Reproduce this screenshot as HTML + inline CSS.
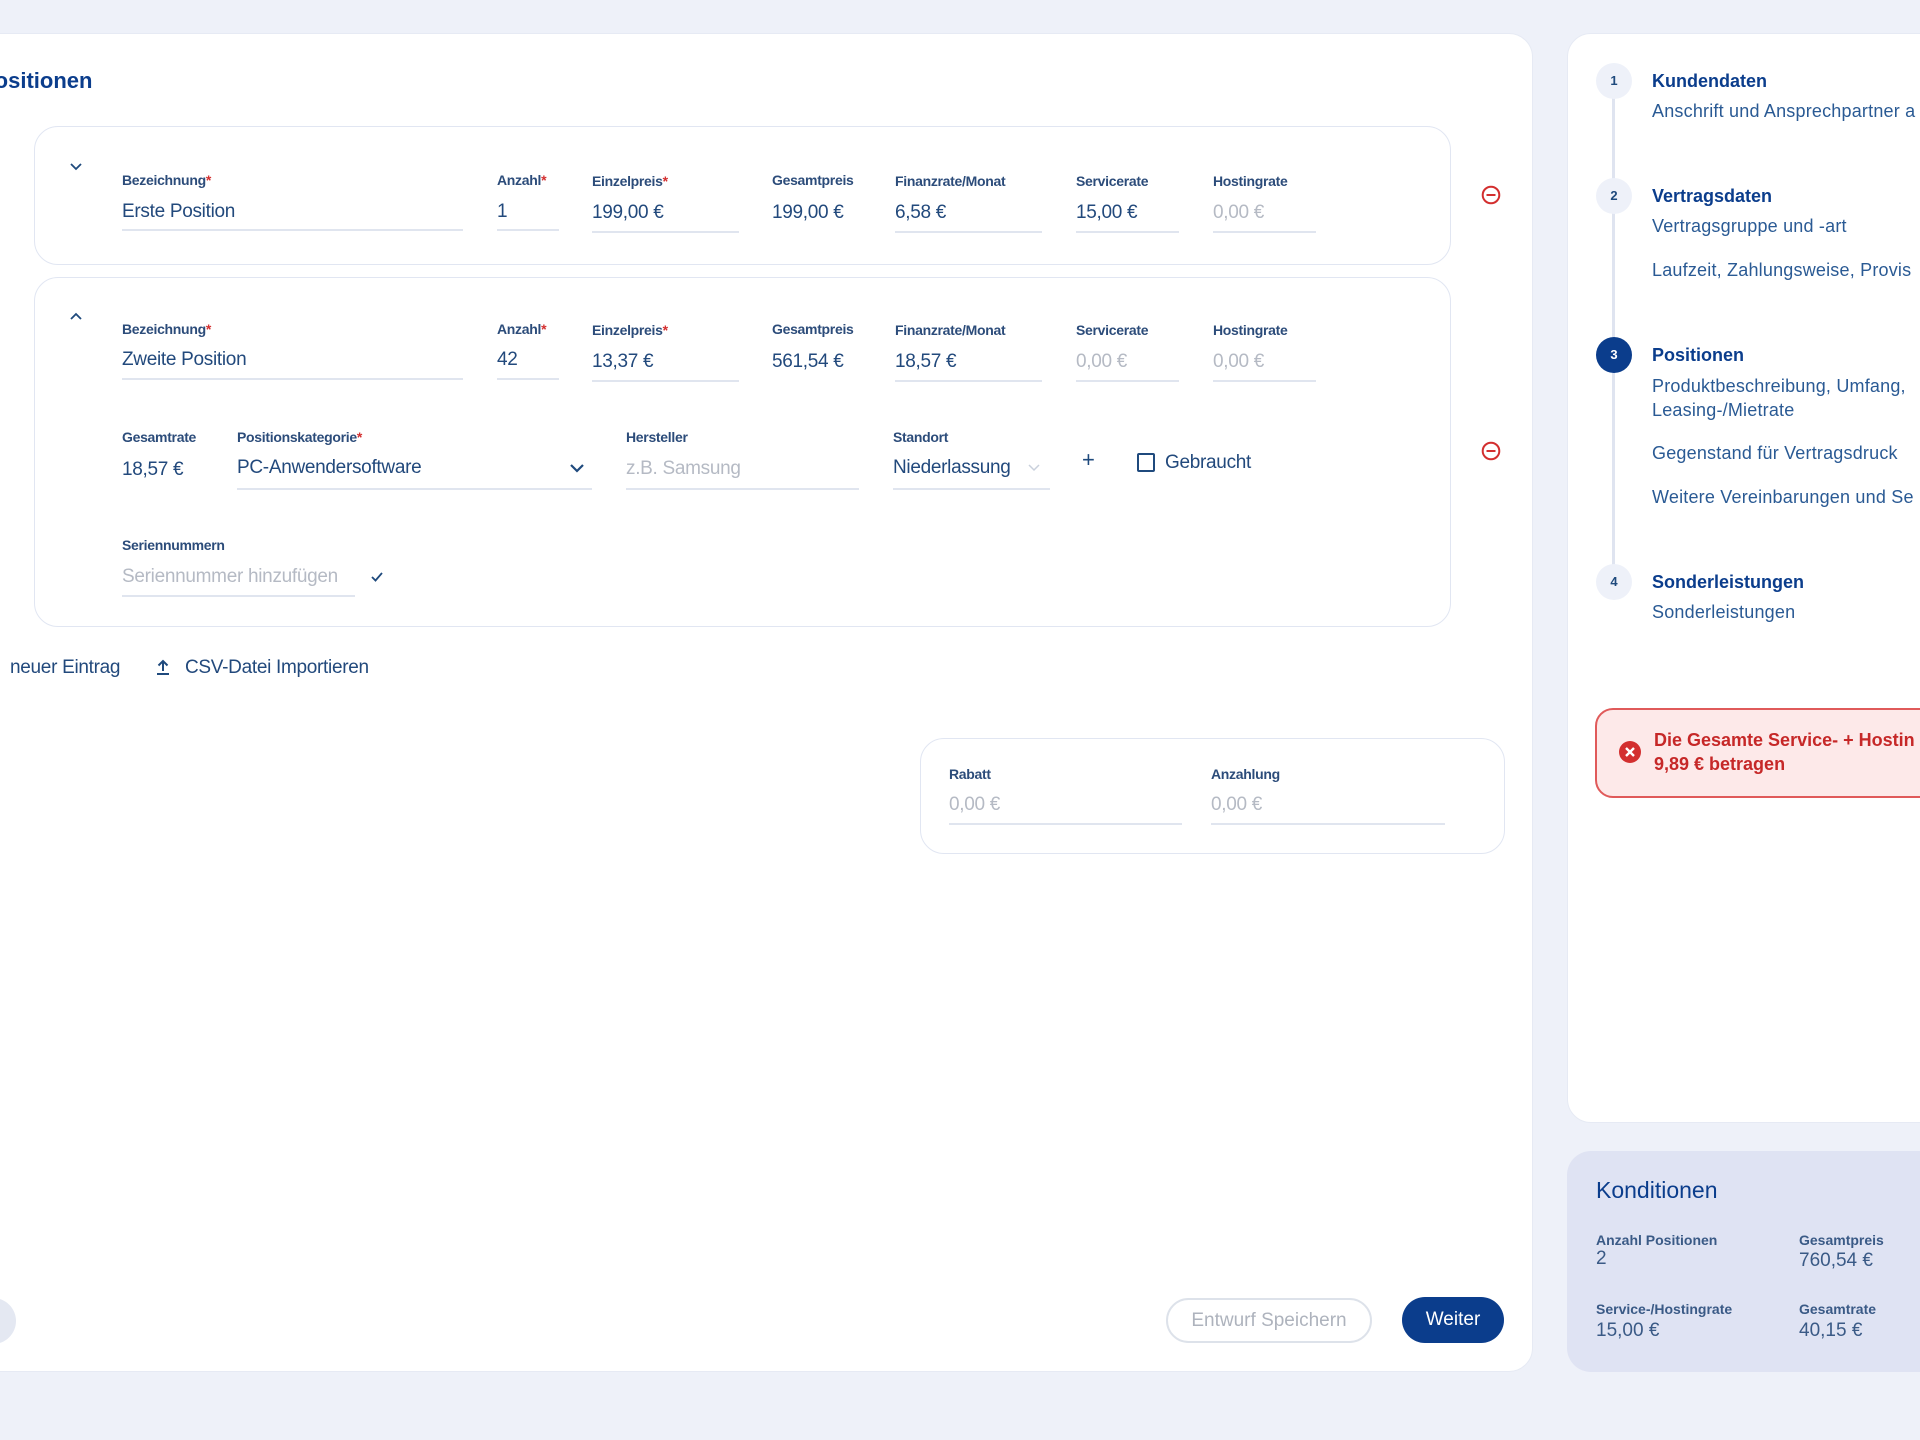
<!DOCTYPE html>
<html><head><meta charset="utf-8"><style>
*{box-sizing:border-box;margin:0;padding:0}
body{width:1920px;height:1440px;background:#eef1f9;position:relative;overflow:hidden;font-family:"Liberation Sans",sans-serif;color:#22497c}
.a{position:absolute;white-space:nowrap}
.card{position:absolute;background:#fff;border:1.5px solid #e1e6f2;border-radius:24px}
.l{position:absolute;font-size:14px;font-weight:bold;color:#2c4c7a;letter-spacing:-0.3px;white-space:nowrap}
.l i{color:#d32f2f;font-style:normal}
.v{position:absolute;font-size:19px;color:#22497c;letter-spacing:-0.3px;white-space:nowrap;line-height:24px}
.p{color:#b5bac4}
.u{position:absolute;height:2px;background:#e0e5ef}
.st{position:absolute;font-size:18px;color:#2a5a94;white-space:nowrap;letter-spacing:0.2px}
.sh{position:absolute;font-size:18px;font-weight:bold;color:#0b3d8c;white-space:nowrap}
.circ{position:absolute;width:36px;height:36px;border-radius:50%;background:#eef1f9;color:#1f4a7d;font-size:13px;font-weight:bold;text-align:center;line-height:36px}
.k{position:absolute;font-size:14px;font-weight:bold;color:#3a5a86;white-space:nowrap}
.kv{position:absolute;font-size:19px;color:#3a5a86;white-space:nowrap}
</style></head><body>

<div class="card" style="left:-40px;top:33px;width:1573px;height:1339px;border-color:#e6eaf4"></div>
<div class="a" style="left:-20px;top:68px;font-size:22px;font-weight:bold;color:#0b3d8c">Positionen</div>

<div class="card" style="left:34px;top:126px;width:1417px;height:139px"></div>
<svg class="a" style="left:69px;top:162px" width="14" height="10" viewBox="0 0 14 10"><path d="M2 2l5 5 5-5" fill="none" stroke="#1f4a7d" stroke-width="1.8"/></svg>
<div class="l" style="left:122px;top:172px">Bezeichnung<i>*</i></div>
<div class="v" style="left:122px;top:200px">Erste Position</div>
<div class="u" style="left:122px;top:229px;width:341px"></div>
<div class="l" style="left:497px;top:172px">Anzahl<i>*</i></div>
<div class="v" style="left:497px;top:200px">1</div>
<div class="u" style="left:497px;top:229px;width:62px"></div>
<div class="l" style="left:592px;top:173px">Einzelpreis<i>*</i></div>
<div class="v" style="left:592px;top:201px">199,00 €</div>
<div class="u" style="left:592px;top:231px;width:147px"></div>
<div class="l" style="left:772px;top:172px">Gesamtpreis</div>
<div class="v" style="left:772px;top:201px">199,00 €</div>
<div class="l" style="left:895px;top:173px">Finanzrate/Monat</div>
<div class="v" style="left:895px;top:201px">6,58 €</div>
<div class="u" style="left:895px;top:231px;width:147px"></div>
<div class="l" style="left:1076px;top:173px">Servicerate</div>
<div class="v" style="left:1076px;top:201px">15,00 €</div>
<div class="u" style="left:1076px;top:231px;width:103px"></div>
<div class="l" style="left:1213px;top:173px">Hostingrate</div>
<div class="v p" style="left:1213px;top:201px">0,00 €</div>
<div class="u" style="left:1213px;top:231px;width:103px"></div>
<svg class="a" style="left:1481px;top:185px" width="20" height="20" viewBox="0 0 20 20"><circle cx="10" cy="10" r="8.3" fill="none" stroke="#d32f2f" stroke-width="2"/><path d="M5.5 10h9" stroke="#d32f2f" stroke-width="2"/></svg>

<div class="card" style="left:34px;top:277px;width:1417px;height:350px"></div>
<svg class="a" style="left:69px;top:311px" width="14" height="10" viewBox="0 0 14 10"><path d="M2 8l5-5 5 5" fill="none" stroke="#1f4a7d" stroke-width="1.8"/></svg>
<div class="l" style="left:122px;top:321px">Bezeichnung<i>*</i></div>
<div class="v" style="left:122px;top:348px">Zweite Position</div>
<div class="u" style="left:122px;top:378px;width:341px"></div>
<div class="l" style="left:497px;top:321px">Anzahl<i>*</i></div>
<div class="v" style="left:497px;top:348px">42</div>
<div class="u" style="left:497px;top:378px;width:62px"></div>
<div class="l" style="left:592px;top:322px">Einzelpreis<i>*</i></div>
<div class="v" style="left:592px;top:350px">13,37 €</div>
<div class="u" style="left:592px;top:380px;width:147px"></div>
<div class="l" style="left:772px;top:321px">Gesamtpreis</div>
<div class="v" style="left:772px;top:350px">561,54 €</div>
<div class="l" style="left:895px;top:322px">Finanzrate/Monat</div>
<div class="v" style="left:895px;top:350px">18,57 €</div>
<div class="u" style="left:895px;top:380px;width:147px"></div>
<div class="l" style="left:1076px;top:322px">Servicerate</div>
<div class="v p" style="left:1076px;top:350px">0,00 €</div>
<div class="u" style="left:1076px;top:380px;width:103px"></div>
<div class="l" style="left:1213px;top:322px">Hostingrate</div>
<div class="v p" style="left:1213px;top:350px">0,00 €</div>
<div class="u" style="left:1213px;top:380px;width:103px"></div>

<div class="l" style="left:122px;top:429px">Gesamtrate</div>
<div class="v" style="left:122px;top:458px">18,57 €</div>
<div class="l" style="left:237px;top:429px">Positionskategorie<i>*</i></div>
<div class="v" style="left:237px;top:456px">PC-Anwendersoftware</div>
<svg class="a" style="left:569px;top:462px" width="16" height="12" viewBox="0 0 16 12"><path d="M2 3l6 6 6-6" fill="none" stroke="#1f4a7d" stroke-width="2.2"/></svg>
<div class="u" style="left:237px;top:488px;width:355px"></div>
<div class="l" style="left:626px;top:429px">Hersteller</div>
<div class="v p" style="left:626px;top:457px">z.B. Samsung</div>
<div class="u" style="left:626px;top:488px;width:233px"></div>
<div class="l" style="left:893px;top:429px">Standort</div>
<div class="v" style="left:893px;top:456px">Niederlassung</div>
<svg class="a" style="left:1027px;top:463px" width="14" height="10" viewBox="0 0 14 10"><path d="M2 2l5 5 5-5" fill="none" stroke="#c9d0dc" stroke-width="1.5"/></svg>
<div class="u" style="left:893px;top:488px;width:157px"></div>
<div class="a" style="left:1082px;top:447px;font-size:22px;color:#1f4a7d">+</div>
<div class="a" style="left:1137px;top:453px;width:18px;height:19px;border:2px solid #1f4a7d;border-radius:2px"></div>
<div class="v" style="left:1165px;top:451px">Gebraucht</div>
<svg class="a" style="left:1481px;top:441px" width="20" height="20" viewBox="0 0 20 20"><circle cx="10" cy="10" r="8.3" fill="none" stroke="#d32f2f" stroke-width="2"/><path d="M5.5 10h9" stroke="#d32f2f" stroke-width="2"/></svg>

<div class="l" style="left:122px;top:537px">Seriennummern</div>
<div class="v p" style="left:122px;top:565px">Seriennummer hinzufügen</div>
<div class="u" style="left:122px;top:595px;width:233px"></div>
<svg class="a" style="left:370px;top:571px" width="14" height="12" viewBox="0 0 14 12"><path d="M2 6l3.5 3.5L12 2" fill="none" stroke="#1f4a7d" stroke-width="1.8"/></svg>

<div class="v" style="left:10px;top:656px">neuer Eintrag</div>
<svg class="a" style="left:154px;top:657px" width="18" height="20" viewBox="0 0 18 20"><path d="M9 14V4M4.5 8.5L9 4l4.5 4.5M3 17h12" fill="none" stroke="#1f4a7d" stroke-width="2"/></svg>
<div class="v" style="left:185px;top:656px">CSV-Datei Importieren</div>

<div class="card" style="left:920px;top:738px;width:585px;height:116px"></div>
<div class="l" style="left:949px;top:766px">Rabatt</div>
<div class="v p" style="left:949px;top:793px">0,00 €</div>
<div class="u" style="left:949px;top:823px;width:233px"></div>
<div class="l" style="left:1211px;top:766px">Anzahlung</div>
<div class="v p" style="left:1211px;top:793px">0,00 €</div>
<div class="u" style="left:1211px;top:823px;width:234px"></div>

<div class="a" style="left:-30px;top:1298px;width:46px;height:46px;border-radius:50%;background:#e4e8f2"></div>
<div class="a" style="left:1166px;top:1298px;width:206px;height:45px;border:2px solid #dde2ea;border-radius:23px;text-align:center;line-height:41px;font-size:19px;color:#aeb3bd">Entwurf Speichern</div>
<div class="a" style="left:1402px;top:1297px;width:102px;height:46px;background:#0b3d8c;border-radius:23px;text-align:center;line-height:46px;font-size:19px;color:#fff">Weiter</div>

<div class="a" style="left:1567px;top:33px;width:400px;height:1090px;background:#fff;border:1.5px solid #e6eaf4;border-radius:24px"></div>
<div class="a" style="left:1612px;top:82px;width:3px;height:500px;background:#dfe4f0"></div>
<div class="circ" style="left:1596px;top:63px">1</div>
<div class="circ" style="left:1596px;top:178px">2</div>
<div class="circ" style="left:1596px;top:337px;background:#0b3d8c;color:#fff">3</div>
<div class="circ" style="left:1596px;top:564px">4</div>
<div class="sh" style="left:1652px;top:71px">Kundendaten</div>
<div class="st" style="left:1652px;top:101px">Anschrift und Ansprechpartner a</div>
<div class="sh" style="left:1652px;top:186px">Vertragsdaten</div>
<div class="st" style="left:1652px;top:216px">Vertragsgruppe und -art</div>
<div class="st" style="left:1652px;top:260px">Laufzeit, Zahlungsweise, Provis</div>
<div class="sh" style="left:1652px;top:345px">Positionen</div>
<div class="st" style="left:1652px;top:376px">Produktbeschreibung, Umfang,</div>
<div class="st" style="left:1652px;top:400px">Leasing-/Mietrate</div>
<div class="st" style="left:1652px;top:443px">Gegenstand für Vertragsdruck</div>
<div class="st" style="left:1652px;top:487px">Weitere Vereinbarungen und Se</div>
<div class="sh" style="left:1652px;top:572px">Sonderleistungen</div>
<div class="st" style="left:1652px;top:602px">Sonderleistungen</div>

<div class="a" style="left:1595px;top:708px;width:400px;height:90px;background:#fde9e9;border:2px solid #e05a5a;border-radius:18px"></div>
<svg class="a" style="left:1618px;top:740px" width="24" height="24" viewBox="0 0 24 24"><circle cx="12" cy="12" r="11" fill="#d32f2f"/><path d="M8 8l8 8M16 8l-8 8" stroke="#fff" stroke-width="2.4"/></svg>
<div class="a" style="left:1654px;top:728px;font-size:18px;font-weight:bold;color:#c62828;line-height:24px">Die Gesamte Service- + Hostin<br>9,89 € betragen</div>

<div class="a" style="left:1567px;top:1151px;width:400px;height:221px;background:#dfe3f3;border-radius:24px"></div>
<div class="a" style="left:1596px;top:1177px;font-size:23px;color:#0b3d8c">Konditionen</div>
<div class="k" style="left:1596px;top:1232px">Anzahl Positionen</div>
<div class="kv" style="left:1596px;top:1248px">2</div>
<div class="k" style="left:1799px;top:1232px">Gesamtpreis</div>
<div class="kv" style="left:1799px;top:1250px">760,54 €</div>
<div class="k" style="left:1596px;top:1301px">Service-/Hostingrate</div>
<div class="kv" style="left:1596px;top:1320px">15,00 €</div>
<div class="k" style="left:1799px;top:1301px">Gesamtrate</div>
<div class="kv" style="left:1799px;top:1320px">40,15 €</div>
</body></html>
